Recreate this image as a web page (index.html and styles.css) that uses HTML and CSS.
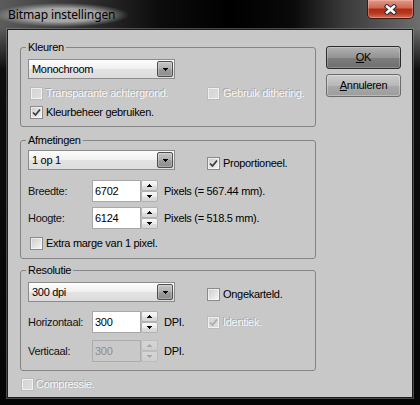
FILE: index.html
```html
<!DOCTYPE html>
<html lang="nl">
<head>
<meta charset="utf-8">
<title>Bitmap instellingen</title>
<link rel="stylesheet" href="styles.css">
</head>
<body>
<div class="window">
  <div class="titlebar">
    <span class="title">Bitmap instellingen</span>
    <div class="close">
      <svg width="13" height="11" viewBox="0 0 13 11"><path d="M3 2.5 L10 8.5 M10 2.5 L3 8.5" stroke="#3a3232" stroke-width="4.6" stroke-linecap="square" fill="none"/><path d="M3 2.5 L10 8.5 M10 2.5 L3 8.5" stroke="#fff" stroke-width="2.4" stroke-linecap="square" fill="none"/></svg>
    </div>
  </div>
  <div class="client">
    <div class="main">
      <div class="group g1">
        <span class="legend">Kleuren</span>
        <div class="row">
          <div class="combo"><span class="combo-text">Monochroom</span><span class="drop"><svg width="5" height="3" viewBox="0 0 5 3"><path d="M0 0h5v1h-5z M1 1h3v1h-3z M2 2h1v1h-1z" fill="#000"/></svg></span></div>
        </div>
        <div class="row r-checks">
          <div class="col1"><label class="check disabled"><span class="box"></span>Transparante achtergrond.</label></div>
          <label class="check disabled"><span class="box"></span>Gebruik dithering.</label>
        </div>
        <div class="row r-checks2">
          <label class="check"><span class="box"><svg width="11" height="11" viewBox="0 0 11 11"><path d="M2 5.5 L4.5 8 L9 2.5" stroke="#3a3a3a" stroke-width="1.7" fill="none"/></svg></span>Kleurbeheer gebruiken.</label>
        </div>
      </div>

      <div class="group g2">
        <span class="legend">Afmetingen</span>
        <div class="row row-top">
          <div class="col1"><div class="combo"><span class="combo-text">1 op 1</span><span class="drop"><svg width="5" height="3" viewBox="0 0 5 3"><path d="M0 0h5v1h-5z M1 1h3v1h-3z M2 2h1v1h-1z" fill="#000"/></svg></span></div></div>
          <label class="check side-check"><span class="box"><svg width="11" height="11" viewBox="0 0 11 11"><path d="M2 5.5 L4.5 8 L9 2.5" stroke="#3a3a3a" stroke-width="1.7" fill="none"/></svg></span>Proportioneel.</label>
        </div>
        <div class="row field f-breedte">
          <span class="flabel">Breedte:</span>
          <div class="edit"><span class="edit-text">6702</span></div>
          <div class="spin">
            <span class="spin-btn"><svg width="5" height="3" viewBox="0 0 5 3"><path d="M2 0h1v1h-1z M1 1h3v1h-3z M0 2h5v1h-5z" fill="#000"/></svg></span>
            <span class="spin-btn"><svg width="5" height="3" viewBox="0 0 5 3"><path d="M0 0h5v1h-5z M1 1h3v1h-3z M2 2h1v1h-1z" fill="#000"/></svg></span>
          </div>
          <span class="unit">Pixels (= 567.44 mm).</span>
        </div>
        <div class="row field f-hoogte">
          <span class="flabel">Hoogte:</span>
          <div class="edit"><span class="edit-text">6124</span></div>
          <div class="spin">
            <span class="spin-btn"><svg width="5" height="3" viewBox="0 0 5 3"><path d="M2 0h1v1h-1z M1 1h3v1h-3z M0 2h5v1h-5z" fill="#000"/></svg></span>
            <span class="spin-btn"><svg width="5" height="3" viewBox="0 0 5 3"><path d="M0 0h5v1h-5z M1 1h3v1h-3z M2 2h1v1h-1z" fill="#000"/></svg></span>
          </div>
          <span class="unit">Pixels (= 518.5 mm).</span>
        </div>
        <div class="row r-extra">
          <label class="check"><span class="box"></span>Extra marge van 1 pixel.</label>
        </div>
      </div>

      <div class="group g3">
        <span class="legend">Resolutie</span>
        <div class="row row-top">
          <div class="col1"><div class="combo"><span class="combo-text">300 dpi</span><span class="drop"><svg width="5" height="3" viewBox="0 0 5 3"><path d="M0 0h5v1h-5z M1 1h3v1h-3z M2 2h1v1h-1z" fill="#000"/></svg></span></div></div>
          <label class="check side-check3"><span class="box"></span>Ongekarteld.</label>
        </div>
        <div class="row f-horiz">
          <div class="col1 field">
            <span class="flabel">Horizontaal:</span>
            <div class="edit"><span class="edit-text">300</span></div>
            <div class="spin">
              <span class="spin-btn"><svg width="5" height="3" viewBox="0 0 5 3"><path d="M2 0h1v1h-1z M1 1h3v1h-3z M0 2h5v1h-5z" fill="#000"/></svg></span>
              <span class="spin-btn"><svg width="5" height="3" viewBox="0 0 5 3"><path d="M0 0h5v1h-5z M1 1h3v1h-3z M2 2h1v1h-1z" fill="#000"/></svg></span>
            </div>
            <span class="unit">DPI.</span>
          </div>
          <label class="check disabled"><span class="box"><svg width="11" height="11" viewBox="0 0 11 11"><path d="M2 5.5 L4.5 8 L9 2.5" stroke="#a9a9a9" stroke-width="1.7" fill="none"/></svg></span>Identiek.</label>
        </div>
        <div class="row field f-vert">
          <span class="flabel">Verticaal:</span>
          <div class="edit edit-disabled"><span class="edit-text">300</span></div>
          <div class="spin spin-disabled">
            <span class="spin-btn"><svg width="5" height="3" viewBox="0 0 5 3"><path d="M2 0h1v1h-1z M1 1h3v1h-3z M0 2h5v1h-5z" fill="#a8a8a8"/></svg></span>
            <span class="spin-btn"><svg width="5" height="3" viewBox="0 0 5 3"><path d="M0 0h5v1h-5z M1 1h3v1h-3z M2 2h1v1h-1z" fill="#a8a8a8"/></svg></span>
          </div>
          <span class="unit">DPI.</span>
        </div>
      </div>

      <div class="row compress">
        <label class="check disabled"><span class="box"></span>Compressie.</label>
      </div>
    </div>

    <div class="buttons">
      <div class="btn btn-default"><span><u>O</u>K</span></div>
      <div class="btn"><span><u>A</u>nnuleren</span></div>
    </div>
  </div>
</div>
</body>
</html>
```

FILE: styles.css
```css
* { box-sizing: border-box; }

html, body {
  margin: 0;
  padding: 0;
}

body {
  width: 420px;
  height: 405px;
  overflow: hidden;
  background: #000;
  font-family: "Liberation Sans", Arial, sans-serif;
  font-size: 11px;
  letter-spacing: -0.3px;
  color: #000;
}

.window {
  width: 420px;
  height: 405px;
  display: flex;
  flex-direction: column;
  padding: 0 7px 7px 7px;
  background:
    linear-gradient(to bottom, rgba(0,0,0,0) 0px, rgba(0,0,0,0) 28px, rgba(6,6,6,0.92) 70px, #050505 100%),
    linear-gradient(to right, #5c5c5c 0%, #353535 18%, #0c0c0c 38%, #000 55%, #0a0a0a 70%, #3a3a3a 82%, #6e6e6e 100%);
}

.titlebar {
  height: 29px;
  flex: none;
  display: flex;
  align-items: flex-start;
  margin: 0 -7px;
  padding-left: 8px;
}

.title {
  font-family: "Noto Sans", "Open Sans", sans-serif;
  font-size: 12px;
  letter-spacing: -0.1px;
  line-height: 16px;
  color: #000;
  padding: 4px 14px;
  margin: 3px -14px 0;
  background: radial-gradient(ellipse closest-side at 50% 50%, rgba(185,185,185,0.85) 55%, rgba(150,150,150,0) 100%);
}

.close {
  margin-left: auto;
  margin-right: 6px;
  width: 47px;
  height: 19px;
  border: 1px solid #3e1a12;
  border-top: none;
  border-radius: 0 0 5px 5px;
  background: linear-gradient(to bottom, #e29a88 0%, #cf6a55 42%, #b32a12 52%, #b83a22 75%, #d2705a 100%);
  box-shadow: inset 0 0 0 1px rgba(255, 210, 200, 0.35);
  display: flex;
  align-items: center;
  justify-content: center;
}

.client {
  flex: 1;
  border: 1px solid #1e1e1e;
  box-shadow: 0 0 0 1px rgba(150,150,150,0.45);
  background: #c8c8c8;
  display: flex;
  gap: 10px;
  padding: 16px 11px 0 12px;
}

.main {
  width: 296px;
  flex: none;
  display: flex;
  flex-direction: column;
  margin-top: 1px;
}

.group {
  position: relative;
  border: 1px solid #858585;
  border-radius: 3px;
  padding: 0 7px;
  display: flex;
  flex-direction: column;
}

.legend {
  position: absolute;
  left: 5px;
  top: -7px;
  padding: 0 2px;
  line-height: 13px;
  background: #c8c8c8;
}

.g1 { padding-top: 11px; padding-bottom: 7px; }
.g2 { margin-top: 13px; padding-top: 9px; padding-bottom: 8px; }
.g3 { margin-top: 11px; padding-top: 11px; padding-bottom: 8px; }

.row {
  display: flex;
  align-items: center;
}

.col1 {
  width: 179px;
  flex: none;
  display: flex;
  align-items: center;
}

.r-checks { margin-top: 8px; height: 13px; }
.r-checks .col1 { padding-left: 2px; }
.r-checks2 { margin-top: 6px; height: 13px; padding-left: 2px; }

.row-top { align-items: flex-start; }
.side-check { margin-top: 7px; }
.side-check3 { margin-top: 6px; }

/* combo */
.combo {
  width: 147px;
  height: 20px;
  border: 1px solid #8c8c8c;
  padding: 1px;
  background: linear-gradient(to bottom, #fdfdfd 0%, #f0f0f0 50%, #e3e3e3 51%, #dcdcdc 100%);
  display: flex;
  align-items: center;
}

.combo-text {
  flex: 1;
  padding-left: 2px;
  line-height: 13px;
}

.drop {
  width: 16px;
  height: 16px;
  border: 1px solid #4e4e4e;
  border-radius: 2px;
  background: linear-gradient(to bottom, #c6c6c6 0%, #aeaeae 50%, #9c9c9c 51%, #8c8c8c 100%);
  box-shadow: inset 0 0 0 1px rgba(255,255,255,0.25);
  display: flex;
  align-items: center;
  justify-content: center;
}

.drop svg, .spin-btn svg { display: block; }

/* checkboxes */
.check {
  display: flex;
  align-items: center;
  gap: 3px;
  line-height: 13px;
  white-space: nowrap;
}

.box {
  width: 13px;
  height: 13px;
  flex: none;
  border: 1px solid #8a8a8a;
  background: linear-gradient(135deg, #cbcbcb 0%, #e6e6e6 60%, #f6f6f6 100%);
  box-shadow: inset 0 0 0 1px rgba(255,255,255,0.55);
}

.box svg { display: block; }

.check.disabled {
  color: #f7f7f7;
  text-shadow: -1px -1px 0 #a4a4a4;
}

.check.disabled .box {
  border-color: #bcbcbc;
  background: linear-gradient(135deg, #d4d4d4 0%, #dedede 100%);
  box-shadow: inset 0 0 0 1px rgba(255,255,255,0.6);
}

/* fields */
.field { height: 22px; }
.f-breedte { margin-top: 10px; }
.f-hoogte { margin-top: 5px; }
.r-extra { margin-top: 8px; height: 13px; padding-left: 2px; }
.f-horiz { margin-top: 9px; height: 22px; }
.f-vert { margin-top: 7px; }

.flabel {
  width: 64px;
  flex: none;
  line-height: 13px;
  color: #111;
}

.edit {
  width: 49px;
  height: 22px;
  flex: none;
  border: 1px solid #a8a8a8;
  background: #fff;
  display: flex;
  align-items: center;
  padding-left: 2px;
}

.edit-text { line-height: 13px; }

.edit-disabled {
  background: #c9c9c9;
  border-color: #acacac;
  color: #8e8e8e;
}

.spin {
  width: 17px;
  height: 22px;
  flex: none;
  display: flex;
  flex-direction: column;
}

.spin-btn {
  height: 11px;
  border: 1px solid #b2b2b2;
  border-radius: 2px;
  background: linear-gradient(to bottom, #f8f8f8 0%, #ececec 50%, #dedede 51%, #d6d6d6 100%);
  display: flex;
  align-items: center;
  justify-content: center;
}

.spin-disabled .spin-btn {
  border-color: #bdbdbd;
  background: linear-gradient(to bottom, #d6d6d6, #cecece);
}

.unit {
  margin-left: 6px;
  line-height: 13px;
  white-space: nowrap;
}

.compress {
  margin-top: 7px;
  margin-left: 1px;
  height: 13px;
}

.compress .check { gap: 2px; }

/* buttons */
.buttons {
  width: 75px;
  flex: none;
  display: flex;
  flex-direction: column;
  gap: 5px;
}

.btn {
  height: 23px;
  border: 1px solid #6c6c6c;
  border-radius: 3px;
  background: linear-gradient(to bottom, #cccccc 0%, #b8b8b8 50%, #a9a9a9 51%, #9c9c9c 100%);
  box-shadow: inset 0 0 0 1px rgba(255,255,255,0.3);
  display: flex;
  align-items: center;
  justify-content: center;
  line-height: 13px;
}

.btn-default {
  border-color: #2c2c2c;
  background: linear-gradient(to bottom, #b2b2b2 0%, #939393 50%, #7e7e7e 51%, #6e6e6e 100%);
  box-shadow: inset 0 0 0 1px rgba(255,255,255,0.22);
}

.btn u { text-decoration: underline; text-underline-offset: 1px; }
```
